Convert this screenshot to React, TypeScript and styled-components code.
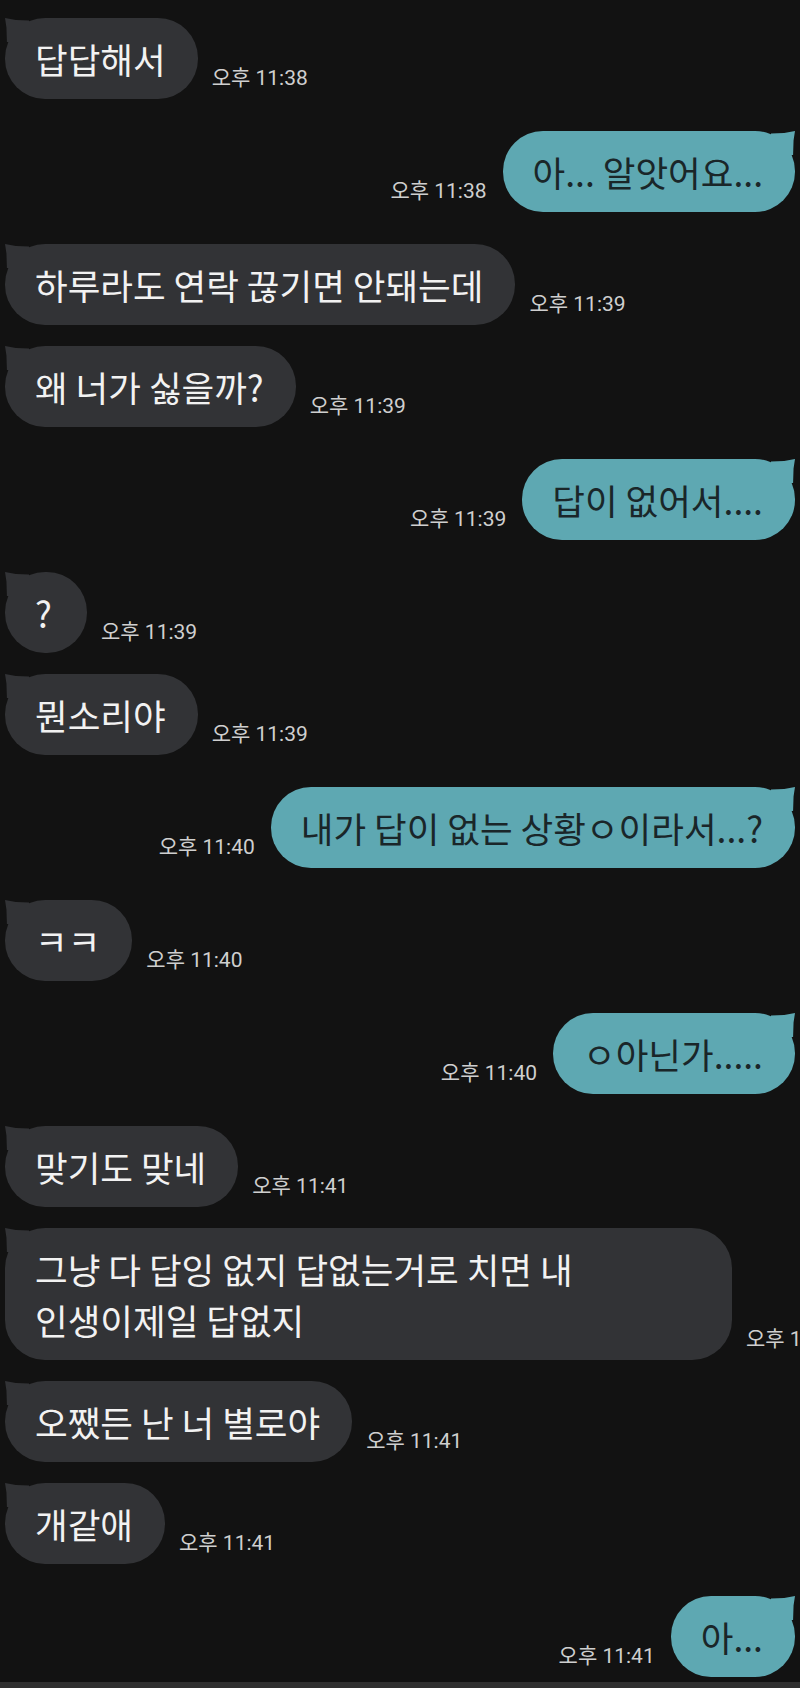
import React from "react";
import styled, { createGlobalStyle } from "styled-components";

const GlobalStyle = createGlobalStyle`
  html, body {
    margin: 0;
    padding: 0;
    background: #121212;
    overflow-x: hidden;
  }
  * {
    box-sizing: border-box;
  }
`;

const Screen = styled.div`
  min-height: 100vh;
  width: 800px;
  display: flex;
  flex-direction: column;
  background: #121212;
  font-family: "Roboto", "Noto Sans CJK KR", "Noto Sans", sans-serif;
  overflow: hidden;
`;

const Thread = styled.div`
  flex: 1;
  padding: 18px 5px 0 5px;
  display: flex;
  flex-direction: column;
`;

const NavStrip = styled.div`
  height: 6px;
  background: #303030;
`;

interface RowProps {
  $mine: boolean;
  $gap: number;
}

const Row = styled.div<RowProps>`
  display: flex;
  align-items: flex-end;
  justify-content: flex-start;
  flex-direction: ${(p) => (p.$mine ? "row-reverse" : "row")};
  gap: ${(p) => (p.$mine ? 16 : 14)}px;
  margin-top: ${(p) => p.$gap}px;
  flex-wrap: nowrap;
`;

const Bubble = styled.div<{ $mine: boolean }>`
  position: relative;
  flex: 0 0 auto;
  max-width: 727px;
  min-width: 82px;
  padding: 15px 32px 15px 30px;
  border-radius: 40px;
  font-family: "Noto Sans CJK KR", "Roboto", sans-serif;
  font-size: 35.5px;
  line-height: 51px;
  white-space: normal;
  word-break: keep-all;
  background: ${(p) => (p.$mine ? "#5ea8b2" : "#323336")};
  color: ${(p) => (p.$mine ? "#1a2629" : "#f2f2f2")};

  &::before {
    content: "";
    position: absolute;
    top: 0;
    width: 24px;
    height: 24px;
    background: inherit;
    ${(p) =>
      p.$mine
        ? `
      right: 0;
      clip-path: polygon(100% 0, 94% 40%, 92% 100%, 0 100%, 0 10%, 55% 8%);
    `
        : `
      left: 0;
      clip-path: polygon(0 0, 45% 8%, 100% 10%, 100% 100%, 8% 100%, 6% 40%);
    `}
  }
`;

const Text = styled.span`
  position: relative;
`;

const Time = styled.span`
  flex: 0 0 auto;
  font-family: "Roboto", "Noto Sans CJK KR", sans-serif;
  font-size: 21px;
  line-height: 24px;
  color: #cfcfcf;
  padding-bottom: 9px;
  white-space: nowrap;
`;

interface Message {
  mine: boolean;
  text: string;
  time: string;
}

const messages: Message[] = [
  { mine: false, text: "답답해서", time: "오후 11:38" },
  { mine: true, text: "아... 알앗어요...", time: "오후 11:38" },
  { mine: false, text: "하루라도 연락 끊기면 안돼는데", time: "오후 11:39" },
  { mine: false, text: "왜 너가 싫을까?", time: "오후 11:39" },
  { mine: true, text: "답이 없어서....", time: "오후 11:39" },
  { mine: false, text: "?", time: "오후 11:39" },
  { mine: false, text: "뭔소리야", time: "오후 11:39" },
  { mine: true, text: "내가 답이 없는 상황ㅇ이라서...?", time: "오후 11:40" },
  { mine: false, text: "ㅋㅋ", time: "오후 11:40" },
  { mine: true, text: "ㅇ아닌가.....", time: "오후 11:40" },
  { mine: false, text: "맞기도 맞네", time: "오후 11:41" },
  {
    mine: false,
    text: "그냥 다 답잉 없지 답없는거로 치면 내 인생이제일 답없지",
    time: "오후 11:41",
  },
  { mine: false, text: "오쨌든 난 너 별로야", time: "오후 11:41" },
  { mine: false, text: "개같애", time: "오후 11:41" },
  { mine: true, text: "아...", time: "오후 11:41" },
];

const App: React.FC = () => {
  return (
    <Screen>
      <GlobalStyle />
      <Thread>
        {messages.map((m, i) => {
          const prev = messages[i - 1];
          const gap = i === 0 ? 0 : prev.mine === m.mine ? 21 : 32;
          return (
            <Row key={i} $mine={m.mine} $gap={gap}>
              <Bubble $mine={m.mine}>
                <Text>{m.text}</Text>
              </Bubble>
              <Time>{m.time}</Time>
            </Row>
          );
        })}
      </Thread>
      <NavStrip />
    </Screen>
  );
};

export default App;
